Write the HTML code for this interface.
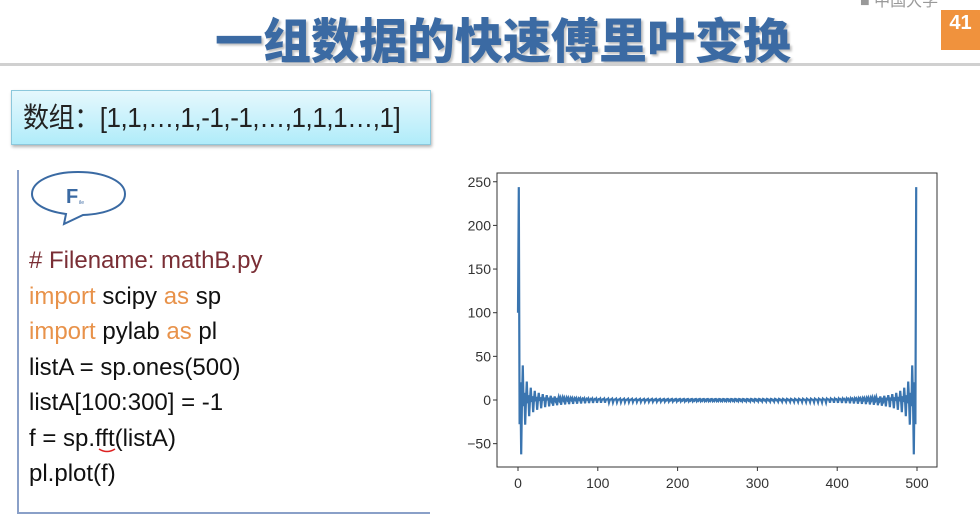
<!DOCTYPE html>
<html><head><meta charset="utf-8"><style>
body{margin:0;width:980px;height:521px;background:#fff;position:relative;overflow:hidden;font-family:"Liberation Sans","Noto Sans CJK SC",sans-serif}
.a{position:absolute}
.title{left:215px;width:560px;top:7px;text-align:center;font-size:48px;font-weight:900;color:#3b6aa3;text-shadow:2px 2px 2px rgba(0,0,0,.25);font-family:"Noto Sans CJK SC",sans-serif;line-height:60px;white-space:nowrap}
.code{left:29px;font-size:24px;color:#111;line-height:35.5px}
.o{color:#e8924a}
</style></head><body>
<div class="a" style="left:860px;top:0;width:120px;height:8px;color:#999;font-size:16px;line-height:4px;overflow:hidden">■ 中国大学</div>
<div class="a" style="left:941px;top:10px;width:39px;height:40px;background:#f0923d;color:#fff;font-weight:bold;font-size:20px;text-align:center;line-height:26px">41</div>
<div class="a title">一组数据的快速傅里叶变换</div>
<div class="a" style="left:0;top:63px;width:980px;height:3px;background:#d0d0d0"></div>
<div class="a" style="left:11px;top:90px;width:420px;height:55px;border:1px solid #8cc8dc;background:linear-gradient(#e6f8fd,#b0ecfa);box-shadow:1px 2px 3px rgba(0,0,0,.3);box-sizing:border-box"></div>
<div class="a" style="left:23px;top:90px;height:55px;font-size:28px;line-height:55px;color:#222;white-space:nowrap;transform:scaleX(0.93);transform-origin:0 0;letter-spacing:-0.5px">数组：[1,1,…,1,-1,-1,…,1,1,1…,1]</div>
<div class="a" style="left:17px;top:170px;width:2px;height:344px;background:#8aa0c8"></div>
<div class="a" style="left:17px;top:512px;width:413px;height:2px;background:#8aa0c8"></div>
<svg class="a" style="left:28px;top:168px" width="102" height="60"><path d="M50 4 C78 4 97 14 97 26 C97 39 78 46 55 47 L36 56 L38 46 C16 43 4 35 4 26 C4 14 22 4 50 4Z" fill="#fff" stroke="#3a6aa3" stroke-width="2"/><text x="38" y="35" font-size="20" font-weight="bold" fill="#3b6aa3" font-family="Liberation Sans">F</text><text x="51" y="36" font-size="5" fill="#3b6aa3">ile</text></svg>
<div class="a code" style="top:243px"><span style="color:#7a2e35"># Filename: mathB.py</span><br><span class="o">import</span> scipy <span class="o">as</span> sp<br><span class="o">import</span> pylab <span class="o">as</span> pl<br>listA = sp.ones(500)<br>listA[100:300] = -1<br>f = sp.fft(listA)<br>pl.plot(f)</div>
<svg class="a" style="left:98px;top:447px" width="22" height="8"><path d="M1 2 Q9 7 17 2" stroke="#d22" stroke-width="1.5" fill="none"/></svg>
<svg class="a" style="left:440px;top:160px" width="540" height="340" font-family="Liberation Sans" font-size="14" fill="#333">
<rect x="57" y="13" width="440" height="294" fill="#fff" stroke="#333" stroke-width="1"/>
<g id="yt" text-anchor="end"></g><g id="xt" text-anchor="middle"></g>
<polyline id="pl" fill="none" stroke="#3a75b0" stroke-width="2.2"/>
</svg>
<script>
var N=500,x=[];for(var n=0;n<N;n++)x.push(n>=100&&n<300?-1:1);
var pts=[];function X(v){return 78+v*0.798}function Y(v){return 240-v*0.873}
for(var k=0;k<N;k++){var s=0;for(var n=0;n<N;n++)s+=x[n]*Math.cos(2*Math.PI*k*n/N);pts.push(X(k).toFixed(2)+','+Y(s).toFixed(2));}
document.getElementById('pl').setAttribute('points',pts.join(' '));
var ns='http://www.w3.org/2000/svg',yt=document.getElementById('yt'),xt=document.getElementById('xt');
[250,200,150,100,50,0,-50].forEach(function(v){var t=document.createElementNS(ns,'text');t.setAttribute('x',51);t.setAttribute('y',Y(v)+5);t.textContent=v<0?'\u221250':v;yt.appendChild(t);var l=document.createElementNS(ns,'line');l.setAttribute('x1',53);l.setAttribute('x2',57);l.setAttribute('y1',Y(v));l.setAttribute('y2',Y(v));l.setAttribute('stroke','#333');yt.appendChild(l);});
[0,100,200,300,400,500].forEach(function(v){var t=document.createElementNS(ns,'text');t.setAttribute('x',X(v));t.setAttribute('y',328);t.textContent=v;xt.appendChild(t);var l=document.createElementNS(ns,'line');l.setAttribute('x1',X(v));l.setAttribute('x2',X(v));l.setAttribute('y1',307);l.setAttribute('y2',311);l.setAttribute('stroke','#333');xt.appendChild(l);});
</script>
</body></html>
